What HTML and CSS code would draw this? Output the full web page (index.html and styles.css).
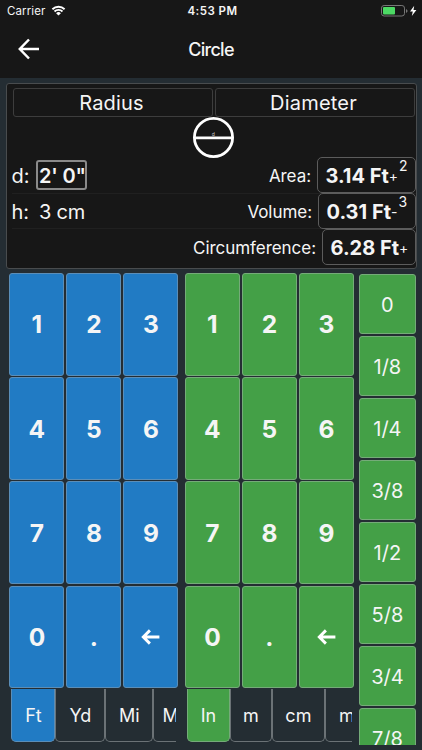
FILE: index.html
```html
<!DOCTYPE html>
<html lang="en">
<head>
    <meta charset="utf-8">
    <title>Circle</title>
    <link rel="stylesheet" href="styles.css">
</head>
<body>
    <header>
        <div class="status">
            <span class="carrier">Carrier</span>
            <svg class="wifi" width="15" height="11" viewBox="0 0 14 11">
                <path d="M0.9 4.2a8.8 8.8 0 0 1 12.2 0M3 6.5a5.7 5.7 0 0 1 8 0" fill="none" stroke="#fff" stroke-width="1.9"/>
                <path d="M4.6 8.2a3.5 3.5 0 0 1 4.8 0L7 10.6z" fill="#fff"/>
            </svg>
            <span class="time">4:53 PM</span>
            <svg class="battery" width="36" height="12" viewBox="0 0 36 12">
                <rect x="0.5" y="0.5" width="23" height="10.5" rx="2.6" fill="none" stroke="#777"/>
                <rect x="2" y="2" width="12" height="7.5" rx="1" fill="#4cd964"/>
                <path d="M25 4v4q1.6-.8 1.6-2t-1.6-2z" fill="#777"/>
                <path d="M33.2 0.8L29 6.4h2.8L30.8 11l4.6-6h-2.9z" fill="#fff"/>
            </svg>
        </div>
        <div class="navbar">
            <svg class="back" width="22" height="22" viewBox="0 0 22 22">
                <path d="M21 11H2M11 1.5L1.8 11L11 20.5" fill="none" stroke="#fff" stroke-width="2.5"/>
            </svg>
            <h1>Circle</h1>
        </div>
    </header>

    <section class="panel">
        <div class="modes">
            <button>Radius</button>
            <button>Diameter</button>
        </div>
        <div class="figure">
            <svg width="42" height="42" viewBox="0 0 42 42">
                <circle cx="20.5" cy="20.5" r="19.1" fill="#171717" stroke="#fff" stroke-width="2.8"/>
                <path d="M2 20.8H39" stroke="#fff" stroke-width="2.7"/>
                <text x="18.7" y="18.6" class="tiny">d</text>
            </svg>
        </div>
        <div class="row">
            <label>d:</label>
            <span class="value selected">2' 0"</span>
            <span class="name">Area:</span>
            <div class="result">3.14 Ft<small>+</small><sup>2</sup></div>
        </div>
        <div class="row">
            <label>h:</label>
            <span class="value">3 cm</span>
            <span class="name">Volume:</span>
            <div class="result volume">0.31 Ft<small>-</small><sup>3</sup></div>
        </div>
        <div class="row">
            <span class="name">Circumference:</span>
            <div class="result length">6.28 Ft<small>+</small></div>
        </div>
    </section>

    <main>
        <div class="pad blue">
            <div class="keys">
                <button>1</button><button>2</button><button>3</button>
                <button>4</button><button>5</button><button>6</button>
                <button>7</button><button>8</button><button>9</button>
                <button>0</button><button>.</button>
                <button><svg width="19" height="16" viewBox="0 0 19 16"><path d="M18.4 8H3M8.9 1.4L2.3 8L8.9 14.6" fill="none" stroke="#fff" stroke-width="2.9"/></svg></button>
            </div>
            <div class="units">
                <button class="active ft">Ft</button>
                <button class="yd">Yd</button>
                <button class="mi">Mi</button>
                <button class="more">M</button>
            </div>
        </div>
        <div class="pad green">
            <div class="keys">
                <button>1</button><button>2</button><button>3</button>
                <button>4</button><button>5</button><button>6</button>
                <button>7</button><button>8</button><button>9</button>
                <button>0</button><button>.</button>
                <button><svg width="19" height="16" viewBox="0 0 19 16"><path d="M18.4 8H3M8.9 1.4L2.3 8L8.9 14.6" fill="none" stroke="#fff" stroke-width="2.9"/></svg></button>
            </div>
            <div class="units">
                <button class="active in">In</button>
                <button class="m">m</button>
                <button class="cm">cm</button>
                <button class="more mm">m</button>
            </div>
        </div>
        <div class="fractions">
            <button>0</button>
            <button>1/8</button>
            <button>1/4</button>
            <button>3/8</button>
            <button>1/2</button>
            <button>5/8</button>
            <button>3/4</button>
            <button>7/8</button>
        </div>
    </main>
</body>
</html>
```
FILE: styles.css
```css
* {
    box-sizing: border-box;
}
body {
    margin: 0;
    width: 422px;
    height: 750px;
    overflow: hidden;
    background: #242d33;
    color: #f5f5f5;
    font-family: Inter, "Liberation Sans", sans-serif;
}
button {
    margin: 0;
    padding: 0;
    font: inherit;
    color: inherit;
    background: none;
    border: 1px solid #444;
    border-radius: 3px;
}
header {
    height: 78px;
    background: #171717;
}
.status {
    display: grid;
    grid-template-columns: 45px 112px 1fr 36px;
    align-items: center;
    height: 22px;
    padding: 0 5px 0 7px;
    font-size: 11.5px;
}
.carrier {
    letter-spacing: 0.1px;
}
.wifi {
    margin: -2px 0 0 -1px;
}
.time {
    margin-left: 23.5px;
    font-weight: 600;
    letter-spacing: 0.45px;
}
.navbar {
    display: grid;
    grid-template-columns: 40px 1fr 40px;
    align-items: center;
    height: 55px;
}
.back {
    margin: -1px 0 0 18px;
}
h1 {
    margin: 0;
    font-size: 18px;
    font-weight: 500;
    letter-spacing: -0.7px;
    text-align: center;
}
.panel {
    width: 411px;
    height: 186px;
    margin: 5px 0 0 5.5px;
    padding: 4px 0 0 6px;
    background: #171717;
    border: 1px solid #494c4e;
    border-radius: 3px;
}
.modes {
    display: flex;
    gap: 2px;
}
.modes button {
    width: 200px;
    height: 29px;
    padding-right: 2px;
    font-size: 20px;
    letter-spacing: 0.2px;
    border-color: #3d3d3d;
}
.figure {
    height: 41px;
    margin-left: 180.5px;
}
.tiny {
    font-size: 5px;
    fill: #ccc;
}
.row {
    display: flex;
    align-items: center;
    height: 35.7px;
    margin-left: -1px;
    border-bottom: 1px solid #202020;
}
.row:last-child {
    border-bottom: none;
}
label {
    width: 24.5px;
    padding-top: 2px;
    font-size: 20px;
}
.value {
    width: 51px;
    height: 30px;
    padding-left: 1px;
    border: 2px solid transparent;
    border-radius: 3px;
    font-size: 20px;
    line-height: 28px;
    letter-spacing: -0.2px;
    white-space: nowrap;
}
.selected {
    border-color: #8a8a8a;
    font-weight: 600;
}
.name {
    margin-left: auto;
    margin-right: 5.5px;
    padding-top: 2px;
    font-size: 17px;
    letter-spacing: -0.05px;
}
.result {
    display: flex;
    align-items: center;
    width: 99px;
    height: 36px;
    padding: 1px 0 0 8px;
    border: 1px solid #5c5c5c;
    border-radius: 5px;
    font-size: 20px;
    font-weight: 700;
    white-space: nowrap;
}
.result small {
    font-size: 14px;
    font-weight: 400;
}
.result sup {
    align-self: flex-start;
    margin: 0 0 0 1px;
    font-size: 14px;
    font-weight: 400;
    line-height: 14px;
}
.volume {
    width: 98px;
}
.length {
    width: 94px;
}
main {
    display: flex;
    margin-top: 4px;
    padding-left: 9.4px;
}
.keys {
    display: grid;
    grid-template-columns: repeat(3, 55px);
    grid-auto-rows: 102.7px;
    gap: 1.5px 2px;
}
.keys button {
    display: flex;
    align-items: center;
    justify-content: center;
    font-size: 24.5px;
    font-weight: 700;
}
.green {
    margin-left: 6.5px;
}
.blue .keys button, .blue .active {
    background: #217bc4;
    border-color: #5b8eb8;
}
.green .keys button, .green .active {
    background: #44a047;
    border-color: #75ab79;
}
.units {
    display: flex;
    width: 165px;
    margin: 1px 0 0 2px;
    overflow: hidden;
}
.units button {
    flex: none;
    height: 53px;
    border-color: #6b7276;
    border-top: none;
    border-radius: 0 0 5px 5px;
    font-size: 18px;
}
.ft {
    width: 44px;
}
.yd {
    width: 50px;
}
.mi {
    width: 48px;
}
.units .more {
    width: 60px;
    padding-left: 8px;
    text-align: left;
}
.in {
    width: 43px;
}
.m {
    width: 42px;
}
.cm {
    width: 53px;
}
.units .mm {
    padding-left: 13px;
}
.fractions {
    display: flex;
    flex-direction: column;
    gap: 2px;
    height: 471px;
    margin: 1px 0 0 5px;
    overflow: hidden;
}
.fractions button {
    flex: none;
    width: 57px;
    height: 60px;
    padding-top: 2px;
    background: #44a047;
    border-color: #75ab79;
    font-size: 20px;
}
```
